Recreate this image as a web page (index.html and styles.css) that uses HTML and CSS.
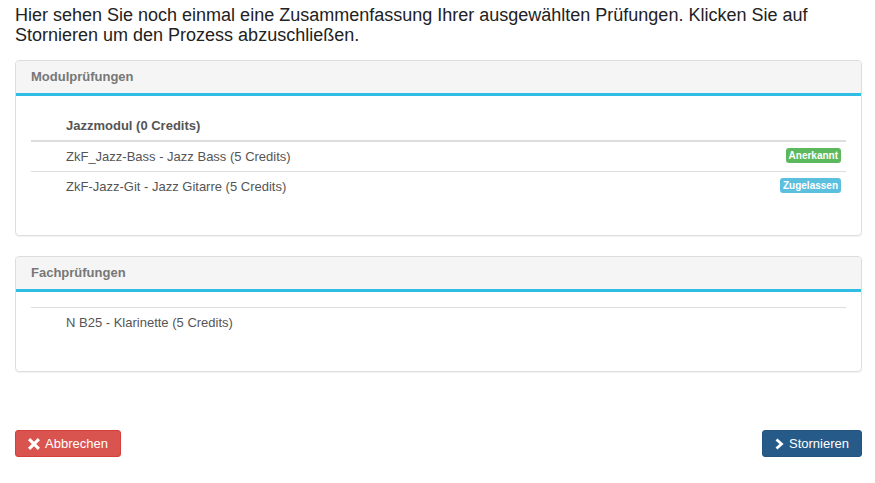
FILE: index.html
```html
<!DOCTYPE html>
<html lang="de">
<head>
    <meta charset="UTF-8">
    <meta name="viewport" content="width=device-width, initial-scale=1.0">
    <title>Prüfungen stornieren</title>
    <link rel="stylesheet" href="styles.css">
</head>
<body>

<div class="container">
    <p class="intro">Hier sehen Sie noch einmal eine Zusammenfassung Ihrer ausgewählten Prüfungen. Klicken Sie auf Stornieren um den Prozess abzuschließen.</p>

    <div class="panel">
        <div class="panel-heading">Modulprüfungen</div>
        <div class="panel-body">
            <div class="list">
                <div class="list-head">Jazzmodul (0 Credits)</div>
                <div class="list-row">
                    <span>ZkF_Jazz-Bass - Jazz Bass (5 Credits)</span>
                    <span class="label label-success">Anerkannt</span>
                </div>
                <div class="list-row">
                    <span>ZkF-Jazz-Git - Jazz Gitarre (5 Credits)</span>
                    <span class="label label-info">Zugelassen</span>
                </div>
            </div>
        </div>
    </div>

    <div class="panel">
        <div class="panel-heading">Fachprüfungen</div>
        <div class="panel-body">
            <div class="list">
                <div class="list-row">
                    <span>N B25 - Klarinette (5 Credits)</span>
                </div>
            </div>
        </div>
    </div>

    <div class="actions">
        <button class="btn btn-danger">
            <svg width="12" height="12" viewBox="0 0 12 12"><path d="M2.2 0 L6 3.8 L9.8 0 L12 2.2 L8.2 6 L12 9.8 L9.8 12 L6 8.2 L2.2 12 L0 9.8 L3.8 6 L0 2.2 Z" fill="#fff"/></svg>
            Abbrechen
        </button>
        <button class="btn btn-primary">
            <svg width="9" height="12" viewBox="0 0 9 12"><path d="M1.5 1.5 L6.5 6 L1.5 10.5" fill="none" stroke="#fff" stroke-width="2.8"/></svg>
            Stornieren
        </button>
    </div>
</div>

</body>
</html>
```

FILE: styles.css
```css
body {
    margin: 0;
    font-family: "Liberation Sans", Arial, sans-serif;
    font-size: 13px;
    color: #555;
    background: #fff;
}

.container {
    padding: 0 13px 0 15px;
}

.intro {
    margin: 5px 0 15px 0;
    font-size: 18px;
    line-height: 20px;
    color: #222;
}

.panel {
    border: 1px solid #ddd;
    border-radius: 4px;
    margin-bottom: 20px;
    box-shadow: 0 1px 1px rgba(0, 0, 0, 0.05);
    overflow: hidden;
}

.panel-heading {
    background-color: #f5f5f5;
    padding: 7px 15px;
    line-height: 18px;
    font-weight: bold;
    color: #777;
    border-bottom: 3px solid #2fbde5;
}

.panel-body {
    padding: 15px 15px 34px 15px;
}

.list-head {
    padding: 5px 5px 5px 35px;
    line-height: 19px;
    font-weight: bold;
    border-bottom: 2px solid #ddd;
}

.list-row {
    display: flex;
    justify-content: space-between;
    align-items: center;
    padding: 5px 5px 5px 35px;
    line-height: 19px;
    border-top: 1px solid #ddd;
}

.list-head + .list-row {
    border-top: none;
}

.label {
    display: inline-block;
    padding: 2px 3px 2px;
    margin-top: -3px;
    font-size: 10px;
    line-height: 11px;
    font-weight: bold;
    color: #fff;
    border-radius: 3px;
}

.label-success {
    background-color: #5cb85c;
}

.label-info {
    background-color: #5bc0de;
}

.actions {
    display: flex;
    justify-content: space-between;
    margin-top: 58px;
}

.btn {
    display: inline-flex;
    align-items: center;
    gap: 5px;
    height: 27px;
    padding: 0 12px;
    font-family: "Liberation Sans", Arial, sans-serif;
    font-size: 13px;
    color: #fff;
    border-radius: 3px;
    border: 1px solid transparent;
    cursor: pointer;
}

.btn-danger {
    background-color: #d9534f;
    border-color: #d43f3a;
}

.btn-primary {
    background-color: #265a88;
    border-color: #245580;
}
```
